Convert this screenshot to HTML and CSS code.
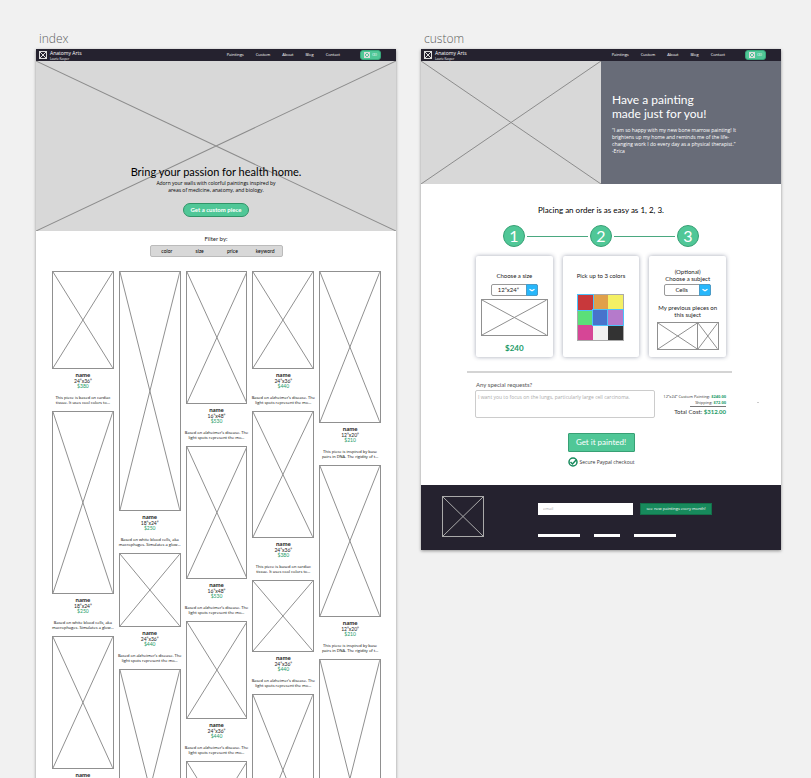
FILE: index.html
```html
<!DOCTYPE html>
<html lang="en">
<head>
<meta charset="utf-8">
<title>Anatomy Arts wireframes</title>
<link rel="stylesheet" href="styles.css">
</head>
<body>
<svg class="defs" aria-hidden="true">
  <symbol id="cross" viewBox="0 0 100 100" preserveAspectRatio="none">
    <path d="M0 0L100 100M100 0L0 100" vector-effect="non-scaling-stroke"/>
  </symbol>
</svg>
<main class="canvas">
  <section class="frame">
    <h2 class="frame-label">index</h2>
    <div class="board">
      <header class="topbar">
        <a class="brand" href="#"><span class="ph logo"><svg><use href="#cross"/></svg></span><span class="brand-text">Anatomy Arts<small>Laurie Kasper</small></span></a>
        <nav class="nav"><a href="#">Paintings</a><a href="#">Custom</a><a href="#">About</a><a href="#">Blog</a><a href="#">Contact</a></nav>
        <button class="cart"><span class="ph cart-icon"><svg><use href="#cross"/></svg></span>(3)</button>
      </header>
      <div class="hero">
        <svg class="hero-cross"><use href="#cross"/></svg>
        <div class="hero-copy">
          <h1>Bring your passion for health home.</h1>
          <p>Adorn your walls with colorful paintings inspired by<br>areas of medicine, anatomy, and biology.</p>
          <button class="pill">Get a custom piece</button>
        </div>
      </div>
      <div class="filter">
        <p>Filter by:</p>
        <div class="filter-bar"><button>color</button><button>size</button><button>price</button><button>keyword</button></div>
      </div>
      <div class="gallery">
        <div class="col">
          <article><div class="ph h98"><svg><use href="#cross"/></svg></div><h3>name</h3><p class="size">24”x36”</p><p class="price">$380</p><p class="desc">This piece is based on cardiac<br>tissue. It uses cool colors to…</p></article>
          <article><div class="ph h183"><svg><use href="#cross"/></svg></div><h3>name</h3><p class="size">18”x24”</p><p class="price">$250</p><p class="desc">Based on white blood cells, aka<br>macrophages. Simulates a glow…</p></article>
          <article><div class="ph h133"><svg><use href="#cross"/></svg></div><h3>name</h3></article>
        </div>
        <div class="col">
          <article><div class="ph h240"><svg><use href="#cross"/></svg></div><h3>name</h3><p class="size">18”x24”</p><p class="price">$250</p><p class="desc">Based on white blood cells, aka<br>macrophages. Simulates a glow…</p></article>
          <article><div class="ph h74"><svg><use href="#cross"/></svg></div><h3>name</h3><p class="size">24”x36”</p><p class="price">$440</p><p class="desc">Based on alzheimer’s disease. The<br>light spots represent the mo…</p></article>
          <article><div class="ph h240"><svg><use href="#cross"/></svg></div></article>
        </div>
        <div class="col">
          <article><div class="ph h133"><svg><use href="#cross"/></svg></div><h3>name</h3><p class="size">16”x48”</p><p class="price">$530</p><p class="desc">Based on alzheimer’s disease. The<br>light spots represent the mo…</p></article>
          <article><div class="ph h133"><svg><use href="#cross"/></svg></div><h3>name</h3><p class="size">16”x48”</p><p class="price">$530</p><p class="desc">Based on alzheimer’s disease. The<br>light spots represent the mo…</p></article>
          <article><div class="ph h98"><svg><use href="#cross"/></svg></div><h3>name</h3><p class="size">24”x36”</p><p class="price">$440</p><p class="desc">Based on alzheimer’s disease. The<br>light spots represent the mo…</p></article>
          <article><div class="ph h98"><svg><use href="#cross"/></svg></div></article>
        </div>
        <div class="col">
          <article><div class="ph h98"><svg><use href="#cross"/></svg></div><h3>name</h3><p class="size">24”x36”</p><p class="price">$440</p><p class="desc">Based on alzheimer’s disease. The<br>light spots represent the mo…</p></article>
          <article><div class="ph h127"><svg><use href="#cross"/></svg></div><h3>name</h3><p class="size">24”x36”</p><p class="price">$380</p><p class="desc">This piece is based on cardiac<br>tissue. It uses cool colors to…</p></article>
          <article><div class="ph h72"><svg><use href="#cross"/></svg></div><h3>name</h3><p class="size">24”x36”</p><p class="price">$440</p><p class="desc">Based on alzheimer’s disease. The<br>light spots represent the mo…</p></article>
          <article><div class="ph h152"><svg><use href="#cross"/></svg></div></article>
        </div>
        <div class="col">
          <article><div class="ph h152"><svg><use href="#cross"/></svg></div><h3>name</h3><p class="size">12”x20”</p><p class="price">$210</p><p class="desc">This piece is inspired by base<br>pairs in DNA. The rigidity of t…</p></article>
          <article><div class="ph h152"><svg><use href="#cross"/></svg></div><h3>name</h3><p class="size">12”x20”</p><p class="price">$210</p><p class="desc">This piece is inspired by base<br>pairs in DNA. The rigidity of t…</p></article>
          <article><div class="ph h240"><svg><use href="#cross"/></svg></div></article>
        </div>
      </div>
    </div>
  </section>

  <section class="frame">
    <h2 class="frame-label">custom</h2>
    <div class="board">
      <header class="topbar">
        <a class="brand" href="#"><span class="ph logo"><svg><use href="#cross"/></svg></span><span class="brand-text">Anatomy Arts<small>Laurie Kasper</small></span></a>
        <nav class="nav"><a href="#">Paintings</a><a href="#">Custom</a><a href="#">About</a><a href="#">Blog</a><a href="#">Contact</a></nav>
        <button class="cart"><span class="ph cart-icon"><svg><use href="#cross"/></svg></span>(3)</button>
      </header>
      <div class="split">
        <div class="split-image"><svg class="hero-cross"><use href="#cross"/></svg></div>
        <div class="split-copy">
          <h1>Have a painting<br>made just for you!</h1>
          <p>“I am so happy with my new bone marrow painting! It<br>brightens up my home and reminds me of the life-<br>changing work I do every day as a physical therapist.”<br>-Erica</p>
        </div>
      </div>
      <form class="order">
        <h2>Placing an order is as easy as 1, 2, 3.</h2>
        <div class="steps"><span class="step">1</span><i></i><span class="step">2</span><i></i><span class="step">3</span></div>
        <div class="cards">
          <div class="card">
            <div class="card-title"><label for="size">Choose a size</label></div>
            <div class="pick"><select id="size"><option>12”x24”</option><option>18”x24”</option></select><svg viewBox="0 0 12 12"><path d="M3 5l3 2 3-2"/></svg></div>
            <div class="ph preview"><svg><use href="#cross"/></svg></div>
            <strong class="amount">$240</strong>
          </div>
          <div class="card">
            <div class="card-title"><span id="colors">Pick up to 3 colors</span></div>
            <div class="swatches" role="group" aria-labelledby="colors">
              <input type="checkbox" class="red" aria-label="Red" checked><input type="checkbox" class="orange" aria-label="Orange"><input type="checkbox" class="yellow" aria-label="Yellow">
              <input type="checkbox" class="green" aria-label="Green"><input type="checkbox" class="blue" aria-label="Blue" checked><input type="checkbox" class="purple" aria-label="Purple" checked>
              <input type="checkbox" class="pink" aria-label="Pink"><input type="checkbox" class="white" aria-label="White"><input type="checkbox" class="black" aria-label="Black">
            </div>
          </div>
          <div class="card">
            <div class="card-title"><label for="subject">(Optional)<br>Choose a subject</label></div>
            <div class="pick"><select id="subject"><option>Cells</option><option>Lungs</option></select><svg viewBox="0 0 12 12"><path d="M3 5l3 2 3-2"/></svg></div>
            <p class="previous">My previous pieces on<br>this suject</p>
            <div class="pieces"><div class="ph"><svg><use href="#cross"/></svg></div><div class="ph"><svg><use href="#cross"/></svg></div></div>
          </div>
        </div>
        <hr>
        <div class="request">
          <div class="request-field">
            <label for="request">Any special requests?</label>
            <textarea id="request" placeholder="I want you to focus on the lungs, particularly large cell carcinoma."></textarea>
          </div>
          <div class="costs">
            <p>12”x24” Custom Painting: <b>$240.00</b></p>
            <p class="shipping">Shipping: <b>$72.00</b></p>
            <p class="total">Total Cost: <b>$312.00</b></p>
          </div>
          <span class="dot"></span>
        </div>
        <button class="submit" type="button">Get it painted!</button>
        <p class="secure"><svg viewBox="0 0 20 20"><circle cx="10" cy="10" r="8"/><path d="M5 10l4 4 8-9"/></svg>Secure Paypal checkout</p>
      </form>
      <footer class="footer">
        <div class="ph footer-logo"><svg><use href="#cross"/></svg></div>
        <div class="footer-main">
          <div class="signup"><input type="email" placeholder="email" aria-label="Email"><button>see new paintings every month!</button></div>
          <div class="bars"><a href="#" aria-label="Link one"></a><a href="#" aria-label="Link two"></a><a href="#" aria-label="Link three"></a></div>
        </div>
      </footer>
    </div>
  </section>
</main>
</body>
</html>
```

FILE: styles.css
```css
:root { --text: "Gill Sans", Lato, sans-serif; --small: "Open Sans", sans-serif; }
* { box-sizing: border-box; }
body { margin: 0; background: #f1f1f1; color: #222; font-family: var(--text); }
h1, h2, h3, p { margin: 0; font-weight: 400; }
a { color: inherit; text-decoration: none; }
button, input, select, textarea { font: inherit; margin: 0; padding: 0; border: 0; border-radius: 0; }
.defs { position: absolute; width: 0; height: 0; }

.canvas { display: grid; grid-template-columns: repeat(2, minmax(0, 1fr)); gap: 25px; align-items: start; height: 100vh; overflow: hidden; padding: 30px 30px 0 36px; }
.frame-label { height: 19px; padding-left: 3px; font: 300 12px/17px "Open Sans", sans-serif; color: #5c605d; }
.board { background: #fff; box-shadow: 0 1px 3px rgba(0, 0, 0, .4); }

.ph { position: relative; border: 1px solid #909090; }
.ph svg { display: block; width: 100%; height: 100%; }
svg { fill: none; stroke: #909090; stroke-width: 1px; }

.topbar { display: flex; align-items: center; height: 12px; padding: 0 15px 0 3px; background: #25222f; color: #fff; font: 4px/6px var(--small); }
.brand { display: flex; align-items: center; gap: 3px; margin-right: auto; font-size: 5px; line-height: 7px; }
.brand small { display: block; font-size: 3px; line-height: 4px; }
.logo { width: 8px; height: 8px; border-color: #ddd; }
.logo svg, .cart-icon svg { stroke: #ddd; }
.nav { display: flex; gap: 12px; margin-right: 20px; }
.cart { display: flex; align-items: center; justify-content: center; gap: 2px; width: 21px; height: 10px; border: 1px solid #38a87b; border-radius: 3px; background: #50c797; color: #fff; }
.cart-icon { width: 6px; height: 6px; border-color: #ddd; }

.hero { position: relative; height: 170px; background: #d8d8d8; text-align: center; }
.hero-cross { position: absolute; inset: 0; width: 100%; height: 100%; stroke: #8c8c8c; }
.hero-copy { position: relative; padding-top: 103px; color: #000; }
.hero h1 { font-size: 11px; line-height: 16px; }
.hero p { font: 5px/7px var(--small); }
.pill { height: 14px; margin-top: 9px; padding: 0 7px; border: 1px solid #319468; border-radius: 7px; background: #50c797; color: #fff; font-size: 6px; font-weight: 700; line-height: 12px; vertical-align: top; }

.filter { padding: 4px 0 14px; text-align: center; font-size: 6px; line-height: 8px; }
.filter-bar { display: flex; width: 133px; height: 12px; margin: 2px auto 0; border: 1px solid #bbb; border-radius: 2px; background: #d8d8d8; }
.filter-bar button { flex: 1; background: none; color: #000; font-size: 5px; line-height: 10px; }

.gallery { display: grid; grid-template-columns: repeat(5, minmax(0, 1fr)); gap: 5px; padding: 0 15px 0 16px; text-align: center; }
.col article { padding-bottom: 6px; }
.col h3 { margin-top: 3px; font-size: 6px; line-height: 6px; font-weight: 700; }
.col p { font-size: 5px; line-height: 5px; white-space: nowrap; }
.col .size { line-height: 6px; }
.col .price { color: #1a9a66; }
.col .desc { display: flex; justify-content: center; margin-top: 6px; font: 4px/5px var(--small); color: #000; }
.h72 { height: 72px; }
.h74 { height: 74px; }
.h98 { height: 98px; }
.h127 { height: 127px; }
.h133 { height: 133px; }
.h152 { height: 152px; }
.h183 { height: 183px; }
.h240 { height: 240px; }

.split { display: grid; grid-template-columns: 1fr 1fr; height: 123px; background: #686c78; color: #fff; }
.split-image { position: relative; background: #d8d8d8; }
.split-copy { padding: 32px 0 0 11px; }
.split-copy h1 { font-size: 12px; line-height: 14px; }
.split-copy p { margin-top: 6px; font: 5px/7px var(--small); white-space: nowrap; }

.order { padding: 21px 0 18px; text-align: center; }
.order h2 { font-size: 8px; line-height: 10px; color: #000; }
.steps { display: flex; align-items: center; gap: 2px; margin: 10px 82px 0; }
.step { width: 22px; height: 22px; border: 1px solid #38a075; border-radius: 50%; background: #50c797; color: #fff; font-size: 16px; line-height: 20px; }
.steps i { flex: 1; height: 1px; background: #4aa880; }
.cards { display: grid; grid-template-columns: repeat(3, minmax(0, 1fr)); gap: 10px; margin: 9px 55px 0; }
.card { height: 101px; padding: 10px 5px 0; border-radius: 2px; background: #fff; box-shadow: 0 0 4px rgba(50, 60, 90, .45); font-size: 6px; line-height: 7px; }
.card-title { display: flex; align-items: center; justify-content: center; height: 18px; }
.pick { position: relative; width: 47px; height: 12px; margin: 0 auto; }
.pick select { appearance: none; width: 100%; height: 12px; padding: 0 12px 0 0; border: 1px solid #999; border-radius: 2px; background: #fff; color: #222; font-size: 6px; line-height: 10px; text-align: center; text-align-last: center; }
.pick svg { position: absolute; top: 0; right: 0; width: 12px; height: 12px; border: 1px solid #4a9cc8; border-radius: 0 2px 2px 0; background: #27b7fb; stroke: #fff; stroke-width: 1.5; pointer-events: none; }
.preview { height: 37px; margin-top: 3px; }
.amount { display: block; margin-top: 8px; font-size: 8px; line-height: 9px; color: #1a9a66; }
.swatches { display: grid; grid-template-columns: repeat(3, 1fr); width: 47px; height: 47px; margin: 10px auto 0; border: 1px solid #aaa; }
.swatches input { appearance: none; width: 100%; height: 100%; }
.swatches input:checked { position: relative; box-shadow: 0 0 0 1px #4cc2fa; }
.red { background: #c8383b; }
.orange { background: #e0a04a; }
.yellow { background: #f4f064; }
.green { background: #5bdf79; }
.blue { background: #4773cc; }
.purple { background: #b57acb; }
.pink { background: #d64696; }
.white { background: #f1f1f1; }
.black { background: #333; }
.previous { margin-top: 8px; }
.pieces { display: grid; grid-template: 28px / 2fr 1fr; width: 62px; margin: 4px auto 0; }
.pieces .ph + .ph { border-left: 0; }
hr { height: 2px; margin: 14px 49px 0 46px; border: 0; background: #d4d4d4; }

.request { position: relative; display: flex; justify-content: space-between; margin: 8px 55px 0 54px; font-size: 6px; color: #555; }
.request-field { flex: none; width: 180px; text-align: left; }
.request-field label { display: block; padding-left: 1px; line-height: 8px; }
.request textarea { display: block; width: 100%; height: 28px; margin-top: 1px; padding: 3px 2px; border: 1px solid #ccc; border-radius: 2px; resize: none; font: 5px/7px var(--small); }
::placeholder { color: #aaa; opacity: 1; }
.costs { padding-top: 13px; text-align: right; font: 4px/6px var(--small); color: #333; white-space: nowrap; }
.costs b { color: #1a9a66; }
.costs .shipping { width: 36px; margin-left: auto; border-bottom: 1px solid #777; }
.costs .total { margin-top: 1px; font: 6px/8px var(--text); }
.dot { position: absolute; top: 21px; right: -33px; width: 2px; height: 1px; background: #ccc; }
.submit { display: block; width: 67px; height: 19px; margin: 15px auto 0; border: 1px solid #38a075; border-radius: 1px; background: #50c797; color: #fff; font-size: 8px; line-height: 17px; }
.secure { display: flex; align-items: center; justify-content: center; gap: 2px; margin-top: 5px; font: 5px/10px var(--small); color: #333; }
.secure svg { width: 10px; height: 10px; stroke: #178a5c; stroke-width: 3; }

.footer { display: flex; gap: 54px; height: 65px; padding: 11px 21px; background: #25222f; }
.footer-logo { flex: none; width: 42px; height: 41px; border-color: #aaa; }
.footer-logo svg { stroke: #aaa; }
.footer-main { padding-top: 7px; }
.signup { display: flex; gap: 7px; }
.signup input { width: 95px; height: 12px; padding: 0 5px; background: #fff; font: 4px/12px var(--small); }
.signup button { width: 72px; height: 12px; border: 1px solid #137049; background: #178a5c; color: #fff; font: 4px/10px var(--small); white-space: nowrap; }
.bars { display: flex; gap: 14px; margin-top: 19px; }
.bars a { width: 42px; height: 3px; background: #fff; }
.bars a:nth-child(2) { width: 26px; }
```
